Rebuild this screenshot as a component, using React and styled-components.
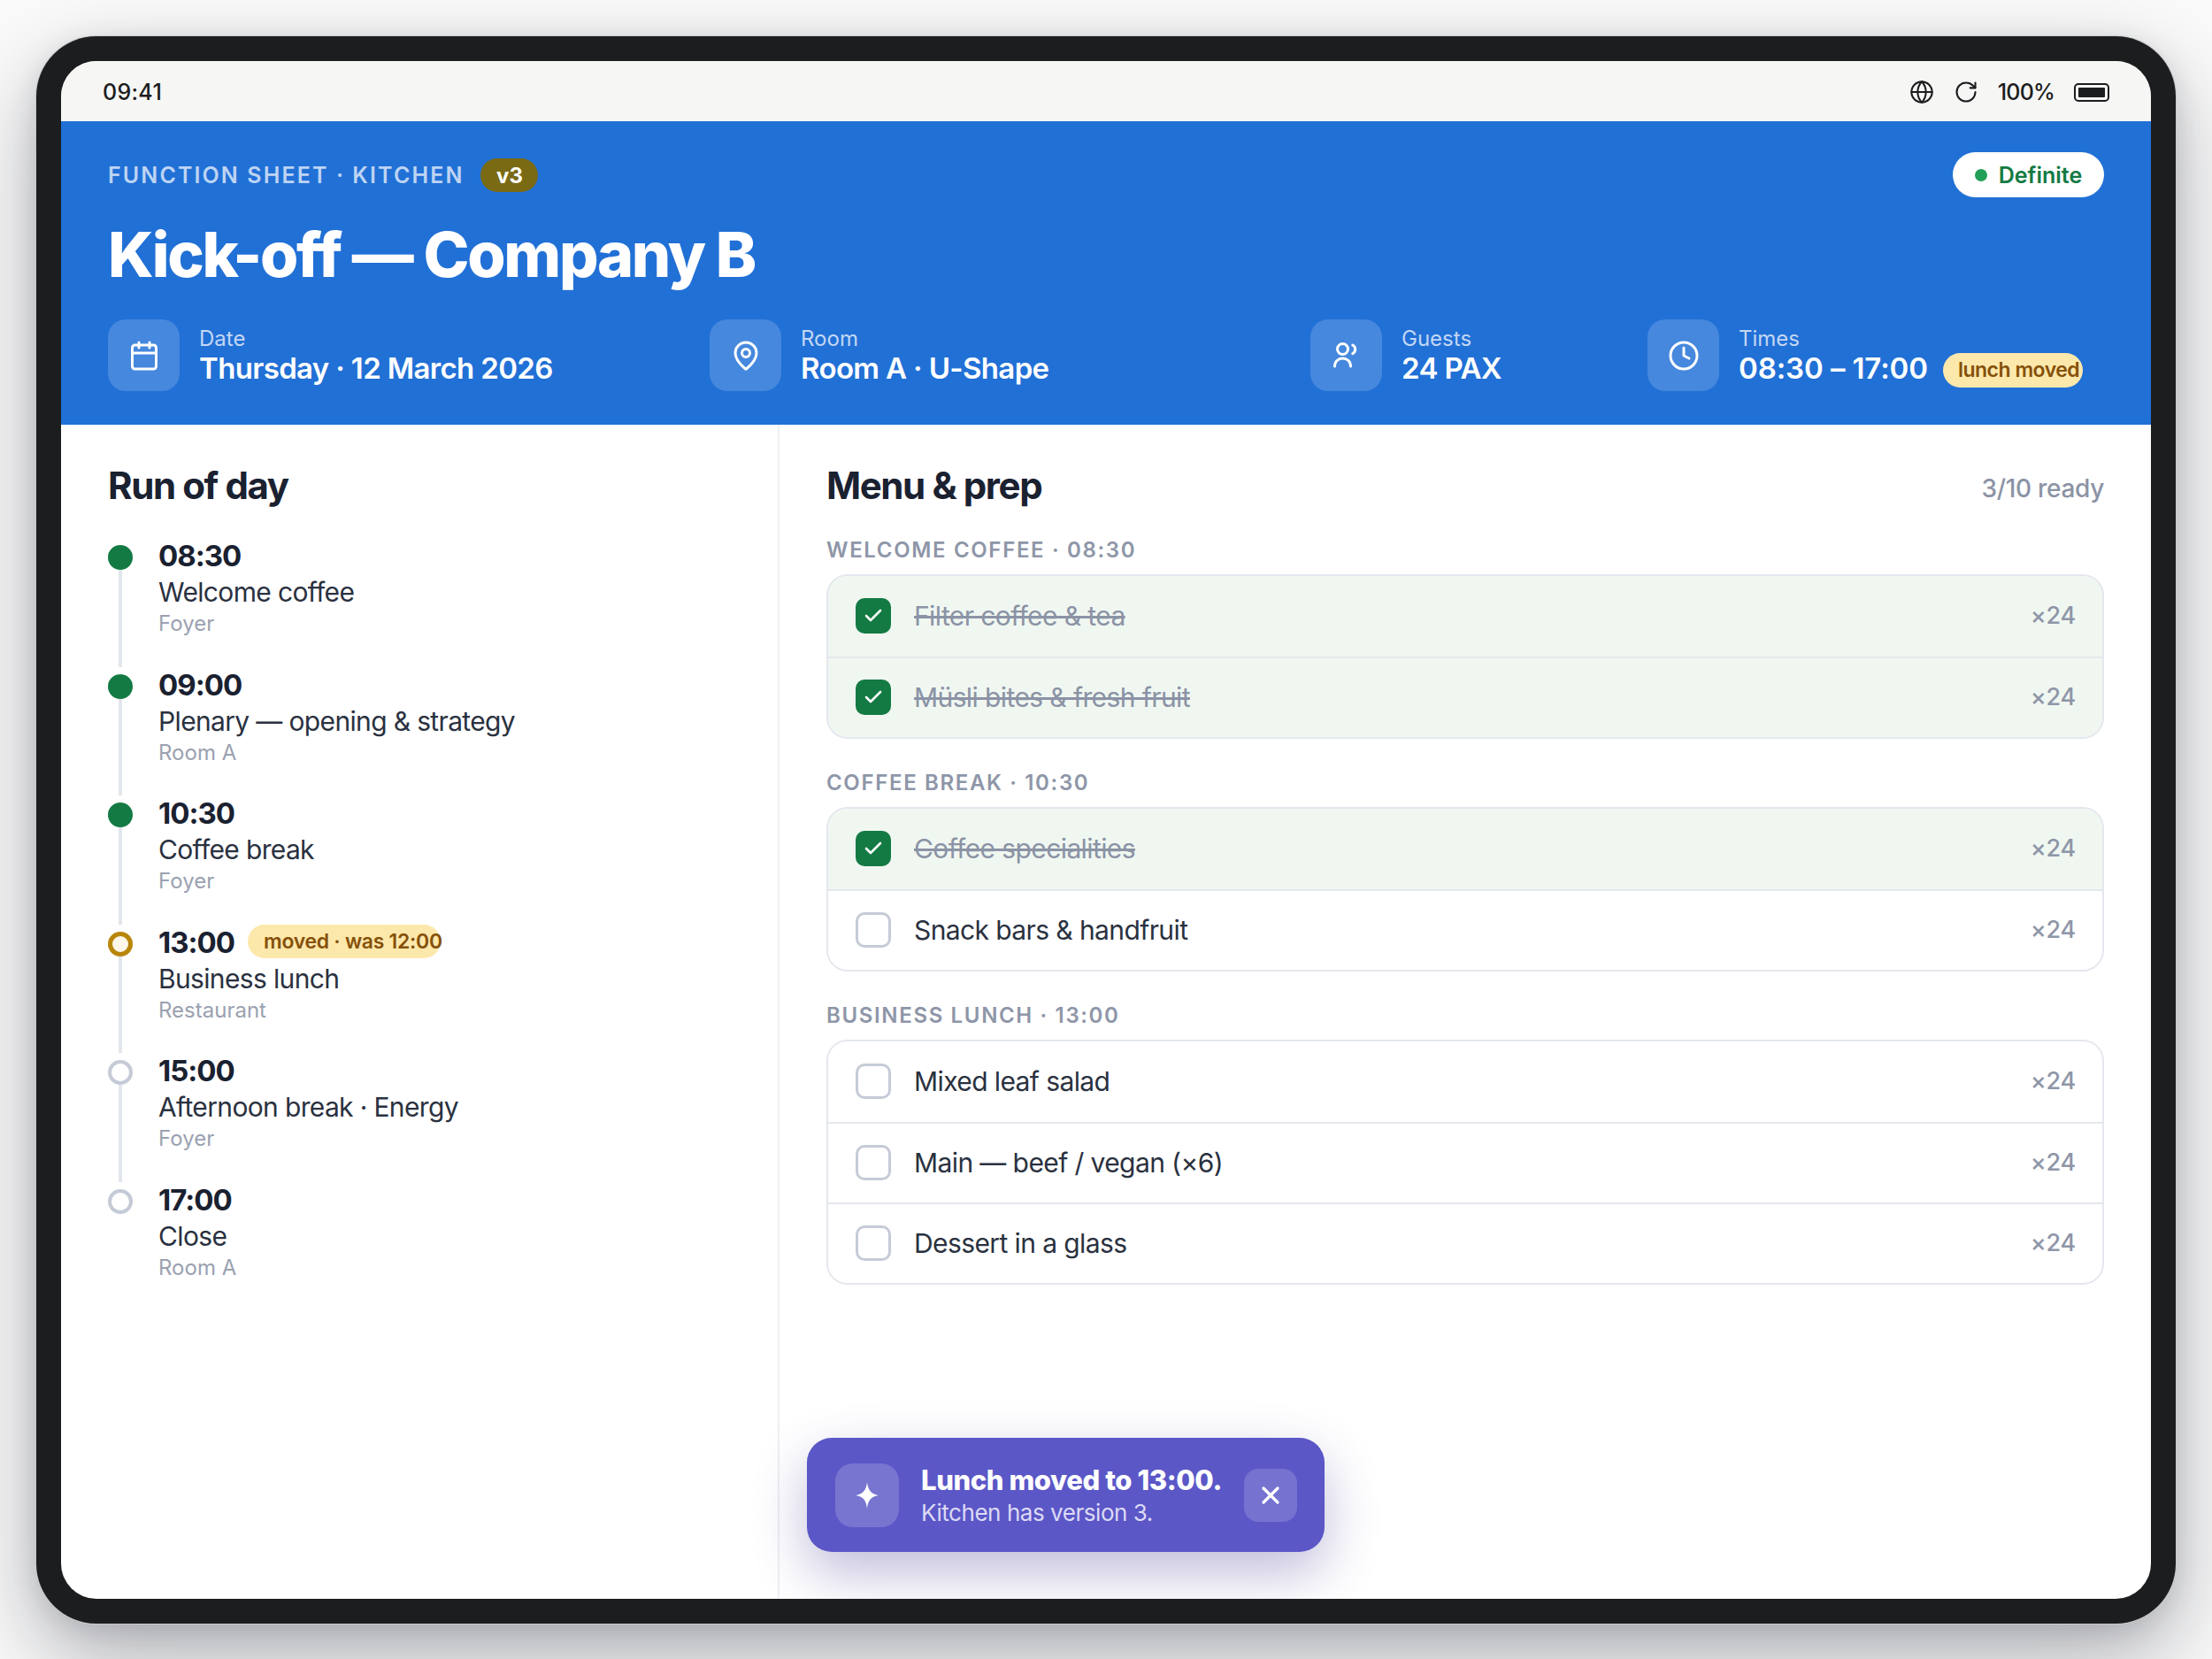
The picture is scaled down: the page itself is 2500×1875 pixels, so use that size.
import React from 'react';
import styled, { createGlobalStyle } from 'styled-components';
import { Calendar, MapPin, Clock, Globe, RotateCw, X, Check } from 'lucide-react';

const schedule = [
  { time: '08:30', title: 'Welcome coffee', place: 'Foyer', state: 'done' },
  { time: '09:00', title: 'Plenary — opening & strategy', place: 'Room A', state: 'done' },
  { time: '10:30', title: 'Coffee break', place: 'Foyer', state: 'done' },
  { time: '13:00', title: 'Business lunch', place: 'Restaurant', state: 'moved', note: 'moved · was 12:00' },
  { time: '15:00', title: 'Afternoon break · Energy', place: 'Foyer', state: 'open' },
  { time: '17:00', title: 'Close', place: 'Room A', state: 'open' },
];

const menu = [
  {
    label: 'Welcome coffee · 08:30',
    items: [
      { name: 'Filter coffee & tea', done: true },
      { name: 'Müsli bites & fresh fruit', done: true },
    ],
  },
  {
    label: 'Coffee break · 10:30',
    items: [
      { name: 'Coffee specialities', done: true },
      { name: 'Snack bars & handfruit' },
    ],
  },
  {
    label: 'Business lunch · 13:00',
    items: [
      { name: 'Mixed leaf salad' },
      { name: 'Main — beef / vegan (×6)' },
      { name: 'Dessert in a glass' },
    ],
  },
];

const GuestsIcon = () => (
  <svg width="36" height="36" viewBox="0 0 24 24" fill="none" stroke="currentColor" strokeWidth="2" strokeLinecap="round">
    <circle cx="9" cy="7" r="4" />
    <path d="M3 20c0-3.600 2.600-6 6-6s6 2.400 6 6" />
    <path d="M16.500 4a3.600 3.600 0 0 1 0 6.400" />
  </svg>
);

const SparkIcon = () => (
  <svg width="32" height="32" viewBox="0 0 24 24" fill="currentColor">
    <path d="M12 1c.9 6.700 3.200 9.800 9.500 11-6.300 1.200-8.600 4.300-9.500 11-.9-6.700-3.200-9.800-9.500-11C8.800 10.800 11.100 7.700 12 1z" />
  </svg>
);

export default function App() {
  return (
    <>
      <GlobalStyle />
      <Page>
        <Device>
          <Screen>
            <StatusBar>
              <span>09:41</span>
              <StatusIcons>
                <Globe size={28} strokeWidth={1.8} />
                <RotateCw size={28} strokeWidth={1.8} />
                <BatteryText>100%</BatteryText>
                <Battery><BatteryFill /></Battery>
              </StatusIcons>
            </StatusBar>

            <Header>
              <HeaderTop>
                <Eyebrow>Function sheet · Kitchen</Eyebrow>
                <VersionBadge>v3</VersionBadge>
                <StatusPill><StatusDot />Definite</StatusPill>
              </HeaderTop>
              <Title>Kick-off — Company B</Title>
              <MetaRow>
                <MetaItem>
                  <MetaIcon><Calendar size={36} strokeWidth={2} /></MetaIcon>
                  <div>
                    <MetaLabel>Date</MetaLabel>
                    <MetaValue>Thursday · 12 March 2026</MetaValue>
                  </div>
                </MetaItem>
                <MetaItem>
                  <MetaIcon><MapPin size={36} strokeWidth={2} /></MetaIcon>
                  <div>
                    <MetaLabel>Room</MetaLabel>
                    <MetaValue>Room A · U-Shape</MetaValue>
                  </div>
                </MetaItem>
                <MetaItem>
                  <MetaIcon><GuestsIcon /></MetaIcon>
                  <div>
                    <MetaLabel>Guests</MetaLabel>
                    <MetaValue>24 PAX</MetaValue>
                  </div>
                </MetaItem>
                <MetaItem>
                  <MetaIcon><Clock size={36} strokeWidth={2} /></MetaIcon>
                  <div>
                    <MetaLabel>Times</MetaLabel>
                    <MetaValue><TimeRange>08:30 – 17:00</TimeRange><LunchTag>lunch moved</LunchTag></MetaValue>
                  </div>
                </MetaItem>
              </MetaRow>
            </Header>

            <Body>
              <RunPanel>
                <PanelTitle>Run of day</PanelTitle>
                <Timeline>
                  {schedule.map((entry, i) => (
                    <Entry key={entry.time}>
                      <Rail>
                        <Dot $state={entry.state} />
                        {i < schedule.length - 1 && <RailLine />}
                      </Rail>
                      <div>
                        <TimeRow>
                          <Time>{entry.time}</Time>
                          {entry.note && <MovedTag>{entry.note}</MovedTag>}
                        </TimeRow>
                        <EntryTitle>{entry.title}</EntryTitle>
                        <EntryPlace>{entry.place}</EntryPlace>
                      </div>
                    </Entry>
                  ))}
                </Timeline>
              </RunPanel>

              <MenuPanel>
                <MenuHead>
                  <PanelTitle>Menu &amp; prep</PanelTitle>
                  <ReadyCount>3/10 ready</ReadyCount>
                </MenuHead>
                {menu.map((group) => (
                  <Group key={group.label}>
                    <GroupLabel>{group.label}</GroupLabel>
                    <Card>
                      {group.items.map((item) => (
                        <Row key={item.name} $done={item.done}>
                          <Box $done={item.done}>
                            {item.done && <Check size={24} strokeWidth={2.6} />}
                          </Box>
                          <ItemName $done={item.done}>{item.name}</ItemName>
                          <Qty>×24</Qty>
                        </Row>
                      ))}
                    </Card>
                  </Group>
                ))}
              </MenuPanel>
            </Body>

            <Toast>
              <ToastIcon><SparkIcon /></ToastIcon>
              <ToastText>
                <ToastTitle>Lunch moved to 13:00.</ToastTitle>
                <ToastSub>Kitchen has version 3.</ToastSub>
              </ToastText>
              <ToastClose><X size={32} strokeWidth={2.4} /></ToastClose>
            </Toast>
          </Screen>
        </Device>
      </Page>
    </>
  );
}

const GlobalStyle = createGlobalStyle`
  html, body {
    margin: 0;
    padding: 0;
    background: #fafafa;
  }

  body {
    font-family: Inter, "Liberation Sans", sans-serif;
    color: #1a2130;
  }

  * {
    box-sizing: border-box;
  }
`;

const Page = styled.div`
  width: 2500px;
  height: 1875px;
  padding: 41px;
  overflow: hidden;
  background: #fafafa;
`;

const Device = styled.div`
  height: 1794px;
  padding: 28px;
  border-radius: 68px;
  background: #1c1d1f;
  box-shadow: 0 0 0 1px #c9cacc, 0 40px 100px rgba(20, 24, 40, 0.33), 0 6px 30px rgba(20, 24, 40, 0.12);
`;

const Screen = styled.div`
  position: relative;
  height: 100%;
  display: flex;
  flex-direction: column;
  overflow: hidden;
  border-radius: 40px;
  background: #fff;
`;

const StatusBar = styled.div`
  flex: 0 0 68px;
  display: flex;
  align-items: center;
  justify-content: space-between;
  padding: 2px 47px 0;
  background: #f6f6f4;
  font-size: 25px;
  font-weight: 500;
  letter-spacing: 0.3px;
  color: #1c1d1f;
`;

const StatusIcons = styled.div`
  display: flex;
  align-items: center;
  gap: 22px;
`;

const BatteryText = styled.span`
  letter-spacing: -0.8px;
`;

const Battery = styled.div`
  width: 40px;
  height: 21px;
  padding: 3px;
  border: 2px solid #1c1d1f;
  border-radius: 5px;
`;

const BatteryFill = styled.div`
  height: 100%;
  background: #1c1d1f;
  border-radius: 1px;
`;

const Header = styled.header`
  flex: 0 0 343px;
  padding: 35px 53px 0;
  background: #2170d6;
  color: #fff;
`;

const HeaderTop = styled.div`
  display: flex;
  align-items: center;
  height: 51px;
`;

const Eyebrow = styled.div`
  font-size: 25px;
  font-weight: 600;
  letter-spacing: 2.1px;
  text-transform: uppercase;
  color: #bdd4f3;
`;

const VersionBadge = styled.span`
  margin-left: 19px;
  width: 65px;
  height: 38px;
  padding-top: 2px;
  display: flex;
  align-items: center;
  justify-content: center;
  border-radius: 19px;
  background: #7a6a14;
  font-size: 24px;
  font-weight: 700;
  color: #fff;
`;

const StatusPill = styled.div`
  margin-left: auto;
  height: 51px;
  width: 171px;
  display: flex;
  align-items: center;
  justify-content: center;
  gap: 13px;
  border-radius: 26px;
  background: #fff;
  font-size: 25px;
  font-weight: 600;
  color: #137a43;
`;

const StatusDot = styled.span`
  width: 14px;
  height: 14px;
  border-radius: 50%;
  background: #22a05a;
`;

const Title = styled.h1`
  margin: 21px 0 0;
  font-size: 70px;
  line-height: 88px;
  font-weight: 800;
  letter-spacing: -2.3px;
`;

const MetaRow = styled.div`
  margin-top: 29px;
  display: grid;
  grid-template-columns: 680px 679px 381px 1fr;
`;

const MetaItem = styled.div`
  display: flex;
  align-items: center;
  gap: 22px;
`;

const MetaIcon = styled.div`
  flex: 0 0 81px;
  height: 81px;
  display: flex;
  align-items: center;
  justify-content: center;
  border-radius: 20px;
  background: rgba(255, 255, 255, 0.17);
  color: #fff;
`;

const MetaLabel = styled.div`
  font-size: 24px;
  line-height: 28px;
  font-weight: 400;
  color: #c3d7f4;
`;

const MetaValue = styled.div`
  display: flex;
  align-items: center;
  height: 38px;
  font-size: 33px;
  line-height: 38px;
  font-weight: 600;
  letter-spacing: -0.65px;
  white-space: nowrap;
`;

const TimeRange = styled.span`
  letter-spacing: -0.1px;
`;

const Tag = styled.span`
  display: inline-block;
  flex: none;
  border-radius: 20px;
  background: #fde8ac;
  color: #855109;
  font-weight: 600;
  letter-spacing: -0.3px;
  white-space: nowrap;
`;

const LunchTag = styled(Tag)`
  width: 158px;
  height: 39px;
  margin: 6px 0 0 17px;
  padding-left: 17px;
  font-size: 23px;
  line-height: 39px;
  letter-spacing: -0.5px;
`;

const Body = styled.div`
  flex: 1;
  display: grid;
  grid-template-columns: 812px 1fr;
  min-height: 0;
`;

const RunPanel = styled.section`
  padding: 43px 53px 0;
  border-right: 2px solid #eef0f3;
`;

const PanelTitle = styled.h2`
  margin: 0;
  font-size: 42px;
  line-height: 52px;
  font-weight: 700;
  letter-spacing: -1.4px;
  color: #1a2130;
`;

const Timeline = styled.div`
  margin-top: 33px;
`;

const Entry = styled.div`
  display: flex;
  gap: 29px;
  height: 145.5px;
`;

const Rail = styled.div`
  flex: 0 0 28px;
  display: flex;
  flex-direction: column;
  align-items: center;
  padding-top: 8px;
`;

const dotStyles = {
  done: 'background: #137a43; border: 5px solid #137a43;',
  moved: 'background: #fff8e8; border: 5px solid #b8860b;',
  open: 'background: #fff; border: 4px solid #c5cbd6;',
};

const Dot = styled.span`
  flex: none;
  width: 28px;
  height: 28px;
  border-radius: 50%;
  ${(p) => dotStyles[p.$state]}
`;

const RailLine = styled.span`
  width: 4px;
  height: 110px;
  background: #e2e6ec;
`;

const TimeRow = styled.div`
  display: flex;
  align-items: center;
  gap: 15px;
  height: 40px;
`;

const Time = styled.span`
  font-size: 33px;
  font-weight: 700;
  letter-spacing: -1px;
  color: #1a2130;
`;

const MovedTag = styled(Tag)`
  width: 218px;
  height: 38px;
  margin-top: -2px;
  padding-left: 18px;
  font-size: 23px;
  line-height: 38px;
`;

const EntryTitle = styled.div`
  margin-top: 1px;
  font-size: 30px;
  line-height: 40px;
  font-weight: 400;
  letter-spacing: -0.65px;
  color: #2a3140;
`;

const EntryPlace = styled.div`
  margin-top: 1px;
  font-size: 24px;
  line-height: 30px;
  color: #9aa1b0;
`;

const MenuPanel = styled.section`
  padding: 43px 53px 0;
`;

const MenuHead = styled.div`
  display: flex;
  align-items: center;
  justify-content: space-between;
  margin-bottom: 32px;
`;

const ReadyCount = styled.span`
  margin-top: 6px;
  font-size: 28px;
  font-weight: 500;
  letter-spacing: -0.3px;
  color: #8b93a5;
`;

const Group = styled.div`
  margin-bottom: 35px;
`;

const GroupLabel = styled.div`
  margin-bottom: 12px;
  font-size: 24px;
  line-height: 30px;
  font-weight: 600;
  letter-spacing: 1.65px;
  text-transform: uppercase;
  color: #8e96a8;
`;

const Card = styled.div`
  border: 2px solid #e4e7ed;
  border-radius: 24px;
  overflow: hidden;
`;

const Row = styled.div`
  height: 91px;
  display: flex;
  align-items: center;
  padding: 0 30px 2px 31px;
  background: ${(p) => (p.$done ? '#f0f7f1' : '#fff')};

  & + & {
    border-top: 2px solid #e4e7ed;
  }
`;

const Box = styled.span`
  flex: none;
  width: 40px;
  height: 40px;
  display: flex;
  align-items: center;
  justify-content: center;
  border-radius: 10px;
  border: ${(p) => (p.$done ? 'none' : '3px solid #c5cbd6')};
  background: ${(p) => (p.$done ? '#137a43' : '#fff')};
  color: #fff;
`;

const ItemName = styled.span`
  margin-left: 26px;
  flex: 1;
  font-size: 30px;
  letter-spacing: -0.6px;
  color: ${(p) => (p.$done ? '#8b93a5' : '#2a3140')};
  text-decoration: ${(p) => (p.$done ? 'line-through' : 'none')};
`;

const Qty = styled.span`
  font-size: 27px;
  font-weight: 500;
  letter-spacing: -0.2px;
  color: #8e96a8;
`;

const Toast = styled.div`
  position: absolute;
  left: 843px;
  bottom: 53px;
  width: 585px;
  height: 129px;
  display: flex;
  align-items: center;
  padding: 0 31px 0 32px;
  border-radius: 28px;
  background: #5b57c7;
  color: #fff;
  box-shadow: 0 24px 60px rgba(60, 50, 140, 0.32);
`;

const ToastIcon = styled.div`
  flex: 0 0 72px;
  height: 72px;
  display: flex;
  align-items: center;
  justify-content: center;
  border-radius: 20px;
  background: rgba(255, 255, 255, 0.18);
`;

const ToastText = styled.div`
  flex: 1;
  margin-left: 25px;
`;

const ToastTitle = styled.div`
  font-size: 31px;
  line-height: 40px;
  font-weight: 800;
  letter-spacing: -0.4px;
`;

const ToastSub = styled.div`
  font-size: 26px;
  line-height: 34px;
  letter-spacing: -0.45px;
  color: #dcdaf5;
`;

const ToastClose = styled.div`
  flex: 0 0 60px;
  height: 60px;
  display: flex;
  align-items: center;
  justify-content: center;
  border-radius: 16px;
  background: rgba(255, 255, 255, 0.16);
`;
